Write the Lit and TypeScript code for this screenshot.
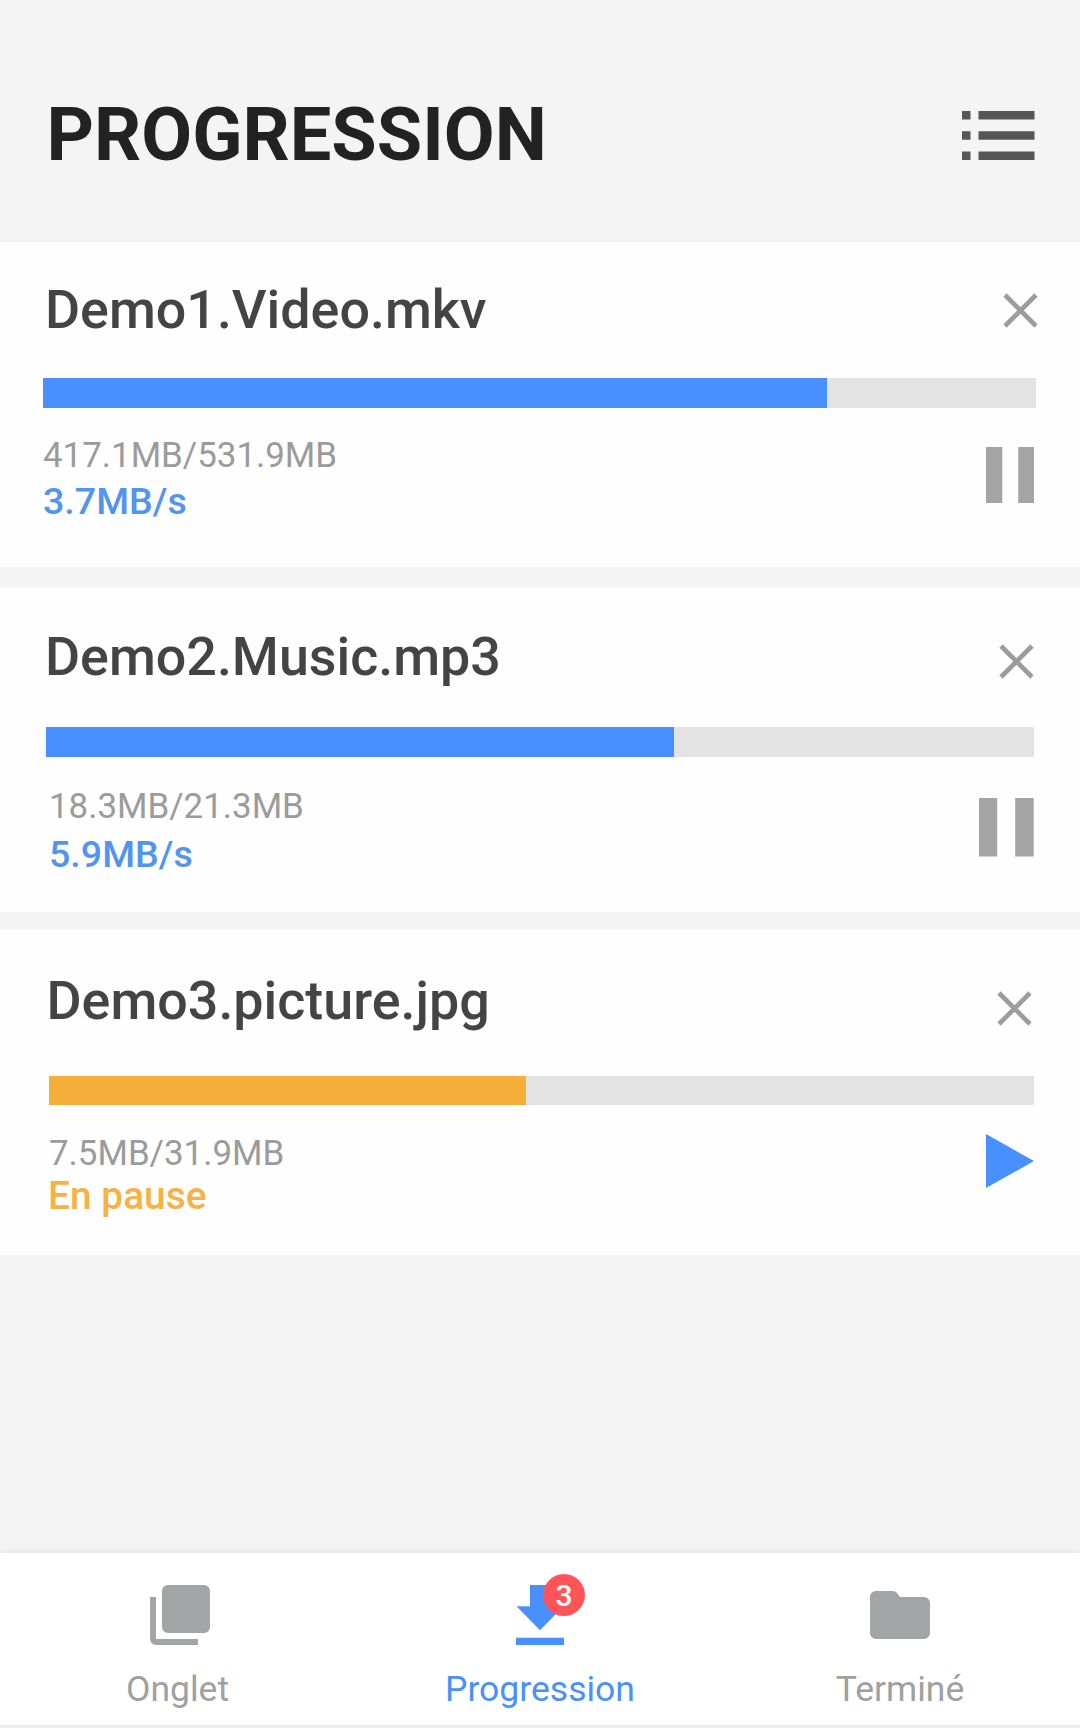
import { LitElement, html, css, svg, nothing } from "lit";
import { customElement, property } from "lit/decorators.js";
import { styleMap } from "lit/directives/style-map.js";

interface Download {
  id: string;
  name: string;
  size: string;
  status: string;
  percent: number;
  paused: boolean;
}

const DOWNLOADS: Download[] = [
  { id: "video", name: "Demo1.Video.mkv", size: "417.1MB/531.9MB", status: "3.7MB/s", percent: 78.95, paused: false },
  { id: "music", name: "Demo2.Music.mp3", size: "18.3MB/21.3MB", status: "5.9MB/s", percent: 63.56, paused: false },
  { id: "picture", name: "Demo3.picture.jpg", size: "7.5MB/31.9MB", status: "En pause", percent: 48.5, paused: true },
];

@customElement("download-card")
export class DownloadCard extends LitElement {
  @property({ attribute: false }) item!: Download;

  static styles = css`
    :host {
      display: block;
    }
    .card {
      box-sizing: border-box;
      background: #fefefe;
      font-family: Roboto, sans-serif;
    }
    .video {
      height: 325px;
      padding: 36px 44px 0 43px;
      --name-x: 2px;
      --bar-gap: 37px;
      --bar-h: 29.5px;
      --stats-gap: 27.5px;
      --size-x: 0px;
      --status-x: 0px;
      --status-gap: 3px;
      --close-gap: 14.5px;
      --close-x: -1.5px;
      --action-gap: 12px;
      --action-x: 2px;
    }
    .music {
      height: 325px;
      padding: 38px 46px 0 46px;
      --name-x: -1px;
      --bar-gap: 38.5px;
      --bar-h: 30.5px;
      --stats-gap: 29px;
      --size-x: 3px;
      --status-x: 3px;
      --status-gap: 5px;
      --close-gap: 19px;
      --close-x: 0px;
      --action-gap: 12px;
      --action-x: 0px;
    }
    .picture {
      height: 325.5px;
      padding: 39.5px 46px 0 48.5px;
      --name-x: -2px;
      --bar-gap: 44px;
      --bar-h: 29px;
      --stats-gap: 28px;
      --size-x: 0.5px;
      --status-x: -0.5px;
      --status-gap: 0px;
      --close-gap: 21.5px;
      --close-x: 2px;
      --action-gap: 1px;
      --action-x: 0.5px;
    }
    .top,
    .bottom {
      display: flex;
      justify-content: space-between;
      align-items: flex-start;
    }
    .top {
      height: 63px;
    }
    .name {
      margin-left: var(--name-x);
      font-size: 53.8px;
      line-height: 63px;
      font-weight: 500;
      color: #444;
      white-space: nowrap;
    }
    .close {
      display: block;
      width: 35px;
      height: 35px;
      margin-top: var(--close-gap);
      margin-right: var(--close-x);
    }
    .track {
      height: var(--bar-h);
      margin-top: var(--bar-gap);
      background: #e3e3e3;
    }
    .fill {
      height: 100%;
      background: #4990ff;
    }
    .picture .fill {
      background: #f5ae39;
    }
    .bottom {
      margin-top: var(--stats-gap);
    }
    .size {
      margin-left: var(--size-x);
      font-size: 34.9px;
      line-height: 41px;
      color: #9b9b9b;
      white-space: nowrap;
    }
    .status {
      margin-left: var(--status-x);
      margin-top: var(--status-gap);
      font-size: 37.6px;
      line-height: 44px;
      font-weight: 500;
      color: #5394ee;
    }
    .picture .status {
      font-size: 38.9px;
      color: #f6b246;
    }
    .action {
      display: block;
      margin-top: var(--action-gap);
      margin-right: var(--action-x);
    }
  `;

  private renderAction() {
    if (this.item.paused) {
      return html`<svg class="action" width="48" height="54" viewBox="0 0 48 54">
        <path d="M0 0 48 27 0 54z" fill="#4990ff" />
      </svg>`;
    }
    return this.item.id === "video"
      ? html`<svg class="action" width="48.5" height="56" viewBox="0 0 48.5 56">
          <path d="M0 0h16.3v56H0zM32.2 0h16.3v56H32.2z" fill="#a4a4a4" />
        </svg>`
      : html`<svg class="action" width="54.7" height="58.5" viewBox="0 0 54.7 58.5">
          <path d="M0 0h18.2v58.5H0zM36.2 0h18.5v58.5H36.2z" fill="#a4a4a4" />
        </svg>`;
  }

  render() {
    const d = this.item;
    return html`
      <article class="card ${d.id}">
        <div class="top">
          <span class="name">${d.name}</span>
          <svg class="close" viewBox="0 0 35 35">
            <path d="M2 2 33 33M33 2 2 33" fill="none" stroke="#9c9c9c" stroke-width="4.6" />
          </svg>
        </div>
        <div class="track"><div class="fill" style=${styleMap({ width: `${d.percent}%` })}></div></div>
        <div class="bottom">
          <div>
            <div class="size">${d.size}</div>
            <div class="status">${d.status}</div>
          </div>
          ${this.renderAction()}
        </div>
      </article>
    `;
  }
}

const ICONS = {
  tabs: svg`<path d="M8 2h12a2 2 0 0 1 2 2v12a2 2 0 0 1-2 2H8a2 2 0 0 1-2-2V4a2 2 0 0 1 2-2zM2 6h2v14h14v2H4a2 2 0 0 1-2-2z" />`,
  download: svg`<path d="M8.67 2h6.66v7.1h4.5L12 17.1 4.17 9.1h4.5zM4 19.6h16V22H4z" />`,
  folder: svg`<path d="M9.6 4H4a2 2 0 0 0-2 2v12a2 2 0 0 0 2 2h16a2 2 0 0 0 2-2V8a2 2 0 0 0-2-2h-8l-1-1.3Q10.4 4 9.6 4z" />`,
};

const TABS: { icon: keyof typeof ICONS; label: string; active?: boolean; badge?: number }[] = [
  { icon: "tabs", label: "Onglet" },
  { icon: "download", label: "Progression", active: true, badge: 3 },
  { icon: "folder", label: "Terminé" },
];

@customElement("app-root")
export class AppRoot extends LitElement {
  static styles = css`
    :host {
      display: block;
      font-family: Roboto, sans-serif;
    }
    .screen {
      display: flex;
      flex-direction: column;
      width: 1080px;
      height: 1728px;
      overflow: hidden;
      background: #f4f4f4;
    }
    .header {
      box-sizing: border-box;
      height: 242px;
      padding: 92px 45.5px 0 46.5px;
      display: flex;
      justify-content: space-between;
      align-items: flex-start;
      flex: none;
      background: linear-gradient(#f4f4f4, #f4f4f4 239px, #f1f1f1);
    }
    .title {
      margin: 0;
      font-size: 73.8px;
      line-height: 87px;
      font-weight: 700;
      color: #222;
    }
    .menu {
      display: block;
      margin-top: 18.5px;
    }
    .list {
      flex: 1;
      display: flex;
      flex-direction: column;
    }
    .first {
      margin-bottom: 20px;
    }
    .second {
      margin-bottom: 17.5px;
    }
    .nav {
      box-sizing: border-box;
      flex: none;
      height: 175px;
      display: grid;
      grid-template-columns: repeat(3, 1fr);
      background: #fff;
      border-bottom: 3px solid #ececec;
      box-shadow: 0 -1px 8px rgba(0, 0, 0, 0.07);
    }
    .tab {
      display: flex;
      flex-direction: column;
      align-items: center;
      padding-top: 26.4px;
      color: #a3a4a6;
    }
    .tab.active {
      color: #4990ff;
    }
    .icon {
      position: relative;
      width: 72px;
      height: 72px;
    }
    .icon svg {
      display: block;
      width: 72px;
      height: 72px;
      fill: currentColor;
    }
    .badge {
      position: absolute;
      left: 39px;
      top: -5.8px;
      width: 42px;
      height: 42px;
      border-radius: 50%;
      background: #ff5558;
      color: #fff;
      font-size: 30px;
      line-height: 43px;
      font-weight: 500;
      text-align: center;
    }
    .label {
      margin-top: 16.6px;
      font-size: 35.5px;
      line-height: 42px;
      color: #a0a0a0;
    }
    .shift {
      margin-right: 5px;
    }
    .active .label {
      color: #4990ff;
    }
  `;

  render() {
    return html`
      <main class="screen">
        <header class="header">
          <h1 class="title">PROGRESSION</h1>
          <svg class="menu" width="72.5" height="49" viewBox="0 0 72.5 49" fill="#565656">
            <path d="M0 0h8.5v8.5H0zM16.5 0h56v8.5h-56zM0 20.3h8.5v8.5H0zM16.5 20.3h56v8.5h-56zM0 40.5h8.5V49H0zM16.5 40.5h56V49h-56z" />
          </svg>
        </header>
        <section class="list">
          ${DOWNLOADS.map(
            (d, i) => html`<download-card class=${["first", "second", "last"][i]} .item=${d}></download-card>`,
          )}
        </section>
        <nav class="nav">
          ${TABS.map(
            (t) => html`
              <div class="tab ${t.active ? "active" : ""}">
                <div class="icon">
                  <svg viewBox="0 0 24 24">${ICONS[t.icon]}</svg>
                  ${t.badge ? html`<span class="badge">${t.badge}</span>` : nothing}
                </div>
                <span class="label ${t.icon === "tabs" ? "shift" : ""}">${t.label}</span>
              </div>
            `,
          )}
        </nav>
      </main>
    `;
  }
}
